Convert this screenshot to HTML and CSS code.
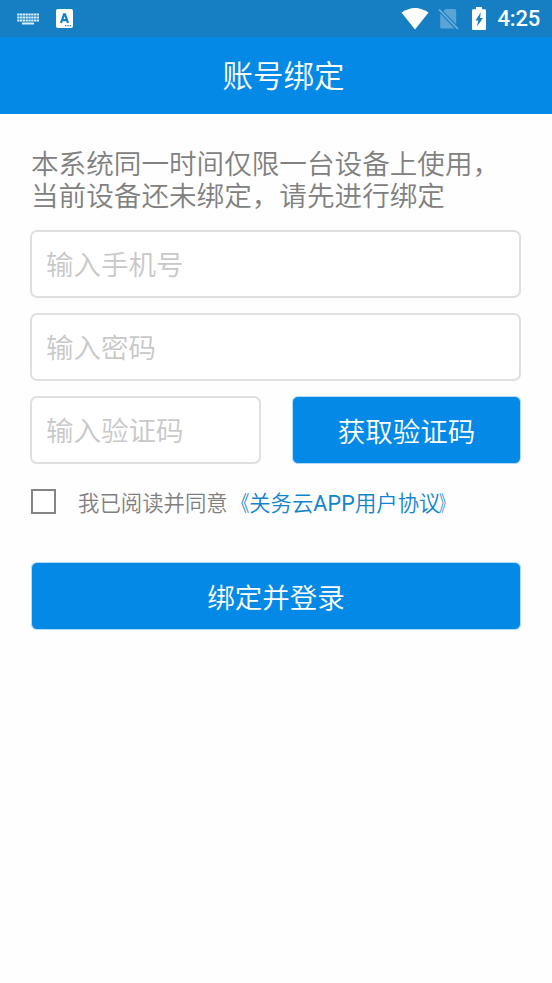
FILE: index.html
```html
<!DOCTYPE html>
<html lang="zh-CN">
<head>
<meta charset="utf-8">
<meta name="viewport" content="width=device-width, initial-scale=1">
<title>账号绑定</title>
<link rel="stylesheet" href="styles.css">
</head>
<body>
<div class="status-bar">
  <svg class="icon-keyboard" width="22" height="12" viewBox="0 0 22 12" aria-hidden="true">
    <path d="M.2 1.5H22M.2 4.5H22M.2 7.5H22" stroke="#d9effc" stroke-width="2.2" stroke-dasharray="2.3 .5" fill="none"/>
    <path d="M5 10.5H17" stroke="#d9effc" stroke-width="2"/>
  </svg>
  <svg class="icon-input" width="17" height="19" viewBox="0 0 17 19" aria-hidden="true">
    <rect width="17" height="19" rx="2" fill="#fff"/>
    <path d="M5 14L8 5.3H9L12 14M6.2 11.2H10.8" stroke="#1680c4" stroke-width="2.2" fill="none"/>
    <path d="M9 16.7H15.5" stroke="#1680c4" stroke-width="1.2" stroke-dasharray="1.4 1"/>
  </svg>
  <div class="status-right">
    <svg width="28" height="22" viewBox="0 0 28 22" aria-hidden="true"><path d="M.5 4.5Q14-4.5 27.5 4.5L14 21.5Z" fill="#fff"/></svg>
    <svg class="icon-sim" width="21" height="22" viewBox="0 0 21 22" aria-hidden="true">
      <path d="M7.5 1H16.5Q18.2 1 18.2 2.7V16.3L5.3 3.2ZM2.2 5.5L16.5 20.5H3.8Q2.2 20.5 2.2 19Z" fill="#5aa4d6"/>
      <path d="M1 1.5L20 21" stroke="#73b4de" stroke-width="1.6"/>
    </svg>
    <svg class="icon-battery" width="14" height="23" viewBox="0 0 14 23" aria-hidden="true">
      <path d="M4 0H10V2.3H12.8Q14 2.3 14 3.5V21.8Q14 23 12.8 23H1.2Q0 23 0 21.8V3.5Q0 2.3 1.2 2.3H4Z" fill="#fff"/>
      <path d="M8.8 5.3L3.5 13.4H6.2L5 19.5L11 11H8Z" fill="#1680c4"/>
    </svg>
    <span class="clock">4:25</span>
  </div>
</div>
<header class="title-bar"><h1>账号绑定</h1></header>
<main class="content">
  <p class="intro">本系统同一时间仅限一台设备上使用，<br>当前设备还未绑定，请先进行绑定</p>
  <form class="form">
    <input class="field" type="tel" placeholder="输入手机号">
    <input class="field" type="password" placeholder="输入密码">
    <div class="code-row">
      <input class="field" type="text" placeholder="输入验证码">
      <button class="button" type="button">获取验证码</button>
    </div>
    <label class="agreement">
      <input class="checkbox" type="checkbox">
      <span>我已阅读并同意<a class="link"><span class="mark-open">《</span>关务云<span class="latin">APP</span>用户协议<span class="mark-close">》</span></a></span>
    </label>
    <button class="button submit" type="button">绑定并登录</button>
  </form>
</main>
</body>
</html>
```

FILE: styles.css
```css
* { box-sizing: border-box; }

body {
  margin: 0;
  min-height: 983px;
  background: #fefefe;
  font-family: Roboto, "Noto Sans CJK SC DemiLight", "Noto Sans CJK SC", sans-serif;
  font-weight: 350;
  color: #808080;
}

.status-bar {
  display: flex;
  align-items: center;
  height: 37px;
  padding: 0 12px 0 17px;
  background: #167fc3;
}

.icon-input { margin-left: 17px; }

.status-right {
  display: flex;
  align-items: center;
  margin-left: auto;
}

.icon-sim { margin-left: 9px; }
.icon-battery { margin-left: 13px; }

.clock {
  margin-left: 11px;
  padding-top: 1px;
  font-size: 22px;
  font-weight: 500;
  line-height: 36px;
  letter-spacing: -0.2px;
  color: #fff;
}

.title-bar {
  display: flex;
  align-items: center;
  justify-content: center;
  height: 77px;
  padding: 3px 0 0 15px;
  background: #048ae6;
}

.title-bar h1 {
  margin: 0;
  font-size: 30.5px;
  font-weight: 350;
  line-height: 44px;
  color: #fff;
}

.content { padding: 34px 31px 0 30px; }

.intro {
  margin: 0 0 17px;
  padding: 1px 0 0 1px;
  font-size: 27.6px;
  line-height: 32px;
  white-space: nowrap;
}

.form {
  display: flex;
  flex-direction: column;
  gap: 15px;
}

.field {
  width: 100%;
  min-width: 0;
  height: 68px;
  padding: 2px 14px 0;
  border: 2px solid #dfdfdf;
  border-radius: 7px;
  background: #fff;
  font: inherit;
  font-size: 27.5px;
  color: #808080;
}

.field::placeholder { color: #c8c8c8; opacity: 1; }

.code-row {
  display: grid;
  grid-template-columns: 231px 229px;
  justify-content: space-between;
}

.button {
  height: 68px;
  padding: 0;
  border: 1px solid #b5dcf7;
  border-radius: 6px;
  background: #048ae6;
  font: inherit;
  font-size: 27.5px;
  color: #fff;
}

.agreement {
  display: flex;
  align-items: center;
  height: 44px;
  font-size: 21.4px;
  white-space: nowrap;
}

.checkbox {
  appearance: none;
  width: 25px;
  height: 25px;
  margin: 0 22px 0 1px;
  border: 2px solid #858585;
  background: #fff;
}

.link { color: #1184cf; }

.latin {
  font-weight: 400;
  letter-spacing: 0.2px;
}

.mark-open,
.mark-close {
  display: inline-block;
  transform: scaleX(0.8);
}

.mark-open { transform-origin: right; }
.mark-close {
  margin-left: -1px;
  transform: scaleX(0.65);
  transform-origin: left;
}

.submit { margin: 24px 0 0 1px; }
```
